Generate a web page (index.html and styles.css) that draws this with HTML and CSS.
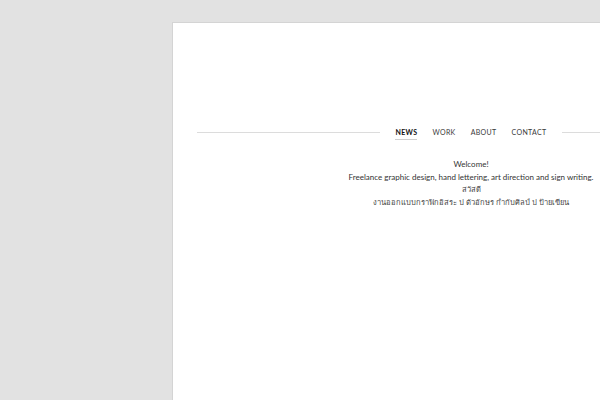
FILE: index.html
```html
<!DOCTYPE html>
<html>
<head>
<meta charset="utf-8">
<link rel="stylesheet" href="styles.css">
</head>
<body>
<div class="panel">
  <nav class="nav">
    <span class="rule"></span>
    <a class="item active">NEWS</a>
    <a class="item">WORK</a>
    <a class="item">ABOUT</a>
    <a class="item">CONTACT</a>
    <span class="rule"></span>
  </nav>
  <main class="content">
    <p>Welcome!</p>
    <p>Freelance graphic design, hand lettering, art direction and sign writing.</p>
    <p class="thai">สวัสดี</p>
    <p class="thai">งานออกแบบกราฟิกอิสระ ป ตัวอักษร กำกับศิลป์ ป ป้ายเขียน</p>
  </main>
</div>
</body>
</html>
```
FILE: styles.css
```css
html, body { margin: 0; padding: 0; }
body {
  background: #e2e2e2;
  padding: 22px 0 0 172px;
  height: 400px;
  box-sizing: border-box;
  overflow: hidden;
  font-family: "Lato", "Noto Sans", sans-serif;
}
.panel {
  width: 598px;
  height: 420px;
  background: #fff;
  border: 1px solid #d4d4d4;
  box-sizing: border-box;
  padding: 0 24px;
}
.nav {
  display: flex;
  align-items: center;
  margin-top: 100px;
  height: 18px;
  gap: 15px;
}
.rule {
  flex: 1;
  height: 1px;
  background: #dcdcdc;
}
.item {
  font-size: 7px;
  letter-spacing: 0.35px;
  color: #3a3a3a;
  position: relative;
}
.item.active {
  font-weight: bold;
  color: #111;
}
.item.active::after {
  content: "";
  position: absolute;
  left: 0; right: 0; bottom: -4px;
  height: 1px;
  background: #cfcfcf;
}
.content {
  margin-top: 17px;
  text-align: center;
  font-size: 8px;
  color: #333;
}
.content p { margin: 0; line-height: 12.5px; }
.content .thai { font-size: 7.6px; color: #444; }
```
